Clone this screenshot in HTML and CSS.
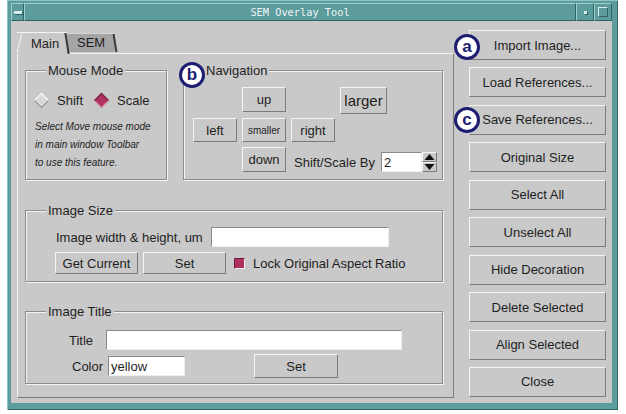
FILE: index.html
```html
<!DOCTYPE html>
<html>
<head>
<meta charset="utf-8">
<title>SEM Overlay Tool</title>
<link rel="stylesheet" href="styles.css">
</head>
<body>
<div class="window">
  <div class="titlebar">
    <div class="tb-btn tb-menu"><span class="menu-bar"></span></div>
    <div class="tb-title">SEM Overlay Tool</div>
    <div class="tb-btn tb-wide"><span class="min-dot"></span></div>
    <div class="tb-btn tb-wide"><span class="max-box"></span></div>
  </div>
  <div class="client">
    <div class="notebook">
      <div class="tabs">
        <div class="tab tab-active">Main</div>
        <div class="tab tab-inactive">SEM</div>
      </div>
      <div class="panel">
        <div class="row-top">
          <div class="group group-mouse">
            <div class="group-title">Mouse Mode</div>
            <div class="radio-row">
              <span class="diamond"></span><span class="radio-label">Shift</span>
              <span class="diamond diamond-on"></span><span class="radio-label">Scale</span>
            </div>
            <p class="note">Select Move mouse mode<br>in main window Toolbar<br>to use this feature.</p>
          </div>
          <div class="group group-nav">
            <span class="badge badge-b">b</span>
            <div class="group-title">Navigation</div>
            <div class="nav-grid">
              <button class="btn nav-up">up</button>
              <button class="btn nav-larger">larger</button>
              <button class="btn nav-left">left</button>
              <button class="btn nav-smaller">smaller</button>
              <button class="btn nav-right">right</button>
              <button class="btn nav-down">down</button>
              <div class="nav-step">
                <span class="step-label">Shift/Scale By</span>
                <div class="spin">
                  <input class="field spin-input" type="text" value="2">
                  <div class="spin-arrows">
                    <svg width="15" height="20" viewBox="0 0 15 20">
                      <rect x="0.5" y="0.5" width="14" height="9" fill="#c9c9c9" stroke="#f4f4f4"/>
                      <path d="M14.5 0.5V9.5H0.5" fill="none" stroke="#7a7a7a"/>
                      <rect x="0.5" y="10.5" width="14" height="9" fill="#c9c9c9" stroke="#f4f4f4"/>
                      <path d="M14.5 10.5V19.5H0.5" fill="none" stroke="#7a7a7a"/>
                      <polygon points="2.5,8 12.5,8 7.5,2" fill="#111"/>
                      <polygon points="2.5,12 12.5,12 7.5,18" fill="#111"/>
                    </svg>
                  </div>
                </div>
              </div>
            </div>
          </div>
        </div>

        <div class="group group-size">
          <div class="group-title">Image Size</div>
          <div class="size-row1">
            <span class="size-label">Image width &amp; height, um</span>
            <input class="field size-input" type="text" value="">
          </div>
          <div class="size-row2">
            <button class="btn size-btn">Get Current</button>
            <button class="btn size-btn size-set">Set</button>
            <span class="checkbox"></span>
            <span class="check-label">Lock Original Aspect Ratio</span>
          </div>
        </div>

        <div class="group group-title-box">
          <div class="group-title">Image Title</div>
          <div class="title-row1">
            <span class="lbl-title">Title</span>
            <input class="field title-input" type="text" value="">
          </div>
          <div class="title-row2">
            <span class="lbl-color">Color</span>
            <input class="field color-input" type="text" value="yellow">
            <button class="btn color-set">Set</button>
          </div>
        </div>
      </div>
    </div>

    <div class="sidebar">
      <span class="badge badge-a">a</span>
      <span class="badge badge-c">c</span>
      <button class="btn side-btn">Import Image...</button>
      <button class="btn side-btn">Load References...</button>
      <button class="btn side-btn">Save References...</button>
      <button class="btn side-btn">Original Size</button>
      <button class="btn side-btn">Select All</button>
      <button class="btn side-btn">Unselect All</button>
      <button class="btn side-btn">Hide Decoration</button>
      <button class="btn side-btn">Delete Selected</button>
      <button class="btn side-btn">Align Selected</button>
      <button class="btn side-btn">Close</button>
    </div>
  </div>
</div>
</body>
</html>
```

FILE: styles.css
```css
* { box-sizing: border-box; }

body {
  margin: 0;
  background: #ffffff;
  font-family: "Liberation Sans", Arial, sans-serif;
  font-size: 13px;
  color: #1e1e1e;
}

/* window frame */
.window {
  margin-left: 7px;
  width: 611px;
  height: 410px;
  background: #5c9c9c;
  padding: 3px 6px 7px 4px;
  display: flex;
  flex-direction: column;
  box-shadow: inset 1px 1px 0 #8fc4c4, inset -1px -1px 0 #2f6262;
}

.titlebar {
  height: 18px;
  display: flex;
}

.tb-btn {
  width: 13px;
  border: 1px solid;
  border-color: #9ed0d0 #2f6262 #2f6262 #9ed0d0;
  display: flex;
  align-items: center;
  justify-content: center;
}

.tb-wide { width: 18px; }

.menu-bar {
  width: 8px;
  height: 3px;
  background: #d8eeee;
  box-shadow: 1px 1px 0 #2f6262;
}

.min-dot {
  width: 3px;
  height: 3px;
  background: #d8eeee;
  box-shadow: 1px 1px 0 #2f6262;
}

.max-box {
  width: 10px;
  height: 10px;
  border: 1px solid;
  border-color: #d8eeee #2f6262 #2f6262 #d8eeee;
}

.tb-title {
  flex: 1;
  display: flex;
  align-items: center;
  justify-content: center;
  border: 1px solid;
  border-color: #9ed0d0 #2f6262 #2f6262 #9ed0d0;
  color: #eef6f6;
  font-family: "DejaVu Sans Mono", "Liberation Mono", monospace;
  font-size: 10.3px;
}

/* client area */
.client {
  flex: 1;
  display: flex;
  background: #c9c9c9;
}

.notebook {
  width: 443px;
  padding: 9px 0 0 6px;
}

.tabs {
  height: 23px;
  display: flex;
  align-items: flex-end;
}

.tab {
  position: relative;
  line-height: 19px;
}

.tab-active {
  z-index: 1;
  width: 50px;
  height: 22px;
  margin-bottom: -1px;
  padding: 1px 0 0 14px;
  background: #c9c9c9;
  border-top: 1px solid #f4f4f4;
}

.tab-active::before {
  content: "";
  position: absolute;
  left: 2px;
  top: 0;
  bottom: 1px;
  width: 1px;
  background: #f4f4f4;
  transform: skewX(-14deg);
}

.tab-active::after,
.tab-inactive::after {
  content: "";
  position: absolute;
  right: -1px;
  top: 0;
  bottom: 0;
  width: 2px;
  background: #3a3a3a;
  transform: skewX(9deg);
}

.tab-inactive {
  width: 48px;
  height: 19px;
  margin-bottom: 1px;
  padding-left: 10px;
  line-height: 18px;
  background: #a5a5a5;
  border-top: 1px solid #d6d6d6;
}

.panel {
  width: 437px;
  height: 345px;
  border: 1px solid;
  border-color: #f4f4f4 #7d7d7d #7d7d7d #f4f4f4;
  padding-left: 7px;
}

/* group boxes */
.group {
  position: relative;
  border: 1px solid #8c8c8c;
  box-shadow: inset 1px 1px 0 #f4f4f4, 1px 1px 0 #f4f4f4;
}

.group-title {
  width: max-content;
  margin: -8px 0 0 20px;
  padding: 0 2px;
  line-height: 15px;
  background: #c9c9c9;
}

.row-top {
  display: flex;
  margin-top: 16px;
}

.group-mouse {
  width: 142px;
  height: 110px;
}

.radio-row {
  margin-top: 14px;
  height: 16px;
  padding-left: 9px;
  display: flex;
  align-items: center;
}

.diamond {
  width: 12px;
  height: 12px;
  display: inline-flex;
  align-items: center;
  justify-content: center;
}

.diamond::before {
  content: "";
  width: 9px;
  height: 9px;
  transform: rotate(45deg);
  background: #d9d9d9;
  border: 1px solid;
  border-color: #ffffff #8a8a8a #8a8a8a #ffffff;
}

.diamond-on {
  margin-left: 12px;
}

.diamond-on::before {
  background: #b03060;
  border-color: #6e1a3c #d8a0b4 #d8a0b4 #6e1a3c;
}

.radio-label {
  margin-left: 10px;
}

.radio-label + .diamond-on { margin-left: 12px; }

.note {
  margin: 10px 0 0;
  padding-left: 9px;
  font-size: 10px;
  font-style: italic;
  line-height: 18px;
  color: #222;
}

.group-nav {
  width: 260px;
  height: 110px;
  margin-left: 16px;
}

.nav-grid {
  margin-top: 9px;
  padding-left: 9px;
  display: grid;
  grid-template-columns: 44px 44px 44px 47px;
  grid-template-rows: 27px 24px 26px;
  column-gap: 5px;
  row-gap: 4px;
}

.btn {
  background: #c9c9c9;
  border: 1px solid;
  border-color: #f4f4f4 #7a7a7a #7a7a7a #f4f4f4;
  padding: 0;
  margin: 0;
  font-family: "Liberation Sans", Arial, sans-serif;
  font-size: 13px;
  color: #1e1e1e;
  display: flex;
  align-items: center;
  justify-content: center;
}

.nav-up { grid-column: 2; grid-row: 1; height: 25px; }
.nav-larger { grid-column: 4; grid-row: 1; height: 27px; font-size: 15px; }
.nav-left { grid-column: 1; grid-row: 2; }
.nav-smaller { grid-column: 2; grid-row: 2; font-size: 10px; }
.nav-right { grid-column: 3; grid-row: 2; }
.nav-down { grid-column: 2; grid-row: 3; height: 25px; margin-top: 1px; }

.nav-step {
  grid-column: 3 / span 2;
  grid-row: 3;
  width: max-content;
  align-self: end;
  display: flex;
  align-items: center;
  padding-left: 3px;
}

.step-label { margin-right: 6px; }

.spin {
  display: flex;
}

.field {
  background: #ffffff;
  border: 1px solid;
  border-color: #8a8a8a #eeeeee #eeeeee #8a8a8a;
  height: 20px;
  padding: 0 2px;
  margin: 0;
  font-family: "Liberation Sans", Arial, sans-serif;
  font-size: 13px;
  color: #1e1e1e;
  outline: none;
}

.spin-input { width: 41px; }

.spin-arrows {
  width: 15px;
  height: 20px;
  display: flex;
}

/* image size */
.group-size {
  width: 418px;
  height: 72px;
  margin-top: 30px;
}

.size-row1 {
  margin-top: 9px;
  padding-left: 30px;
  display: flex;
  align-items: center;
}

.size-label { width: 155px; white-space: nowrap; }

.size-input { width: 178px; }

.size-row2 {
  margin-top: 5px;
  padding-left: 29px;
  display: flex;
  align-items: center;
}

.size-btn { width: 83px; height: 22px; }

.size-set { margin-left: 5px; }

.checkbox {
  width: 11px;
  height: 11px;
  margin-left: 8px;
  background: #b03060;
  border: 1px solid;
  border-color: #6e1a3c #f4f4f4 #f4f4f4 #6e1a3c;
}

.check-label { margin-left: 8px; }

/* image title */
.group-title-box {
  width: 418px;
  height: 73px;
  margin-top: 29px;
}

.title-row1 {
  margin-top: 11px;
  padding-left: 43px;
  display: flex;
  align-items: center;
}

.lbl-title { width: 37px; }

.title-input { width: 296px; }

.title-row2 {
  margin-top: 4px;
  padding-left: 46px;
  display: flex;
  align-items: center;
  height: 24px;
}

.lbl-color { width: 36px; }

.color-input { width: 77px; }

.color-set {
  width: 84px;
  height: 24px;
  margin-left: 69px;
}

/* right column */
.sidebar {
  position: relative;
  width: 137px;
  margin-left: 15px;
  padding: 9px 0 6px;
  display: flex;
  flex-direction: column;
  justify-content: space-between;
}

.side-btn {
  width: 137px;
  height: 30px;
}

/* callout badges */
.badge {
  position: absolute;
  z-index: 2;
  width: 26px;
  height: 26px;
  border: 3px solid #1d1d72;
  border-radius: 50%;
  background: #ffffff;
  color: #1d1d72;
  font-family: "Liberation Sans", Arial, sans-serif;
  font-weight: bold;
  font-size: 17px;
  line-height: 19px;
  text-align: center;
}

.badge-a { left: -15px; top: 13px; }
.badge-c { left: -15px; top: 86px; }
.badge-b { left: -5px; top: -9px; }
```
